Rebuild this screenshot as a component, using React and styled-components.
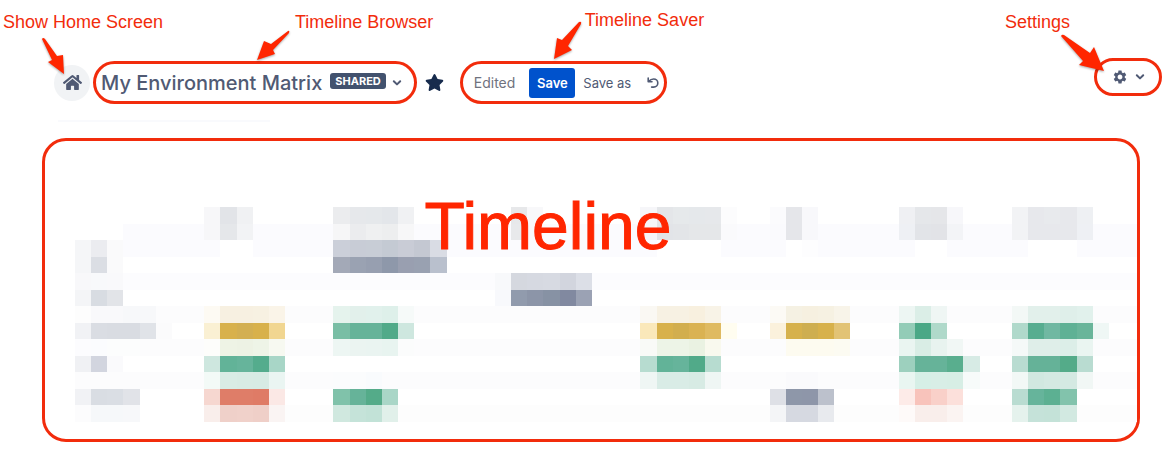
import React from "react";
import styled, { createGlobalStyle } from "styled-components";
import { FaHome, FaStar } from "react-icons/fa";
import { MdSettings } from "react-icons/md";

const RED = "#f22c0c";
const SLATE = "#505a74";

const GlobalStyle = createGlobalStyle`
  * { box-sizing: border-box; }
  body {
    margin: 0;
    background: #fff;
    color: ${SLATE};
    font-family: Inter, "Liberation Sans", sans-serif;
  }
  button { font-family: inherit; cursor: pointer; }
`;

const Page = styled.div`
  padding-bottom: 12px;
`;

const Header = styled.header`
  display: flex;
  align-items: flex-start;
  justify-content: space-between;
  padding: 58px 12px 0 54px;
`;

const Tools = styled.div`
  display: flex;
  align-items: center;
  padding-top: 3px;
`;

const Target = styled.div`
  position: relative;
  display: flex;
  flex: none;
  margin-left: ${(p) => p.$gap || 0}px;
`;

const Ring = styled.div`
  display: flex;
  align-items: center;
  height: ${(p) => p.$height}px;
  border: 3px solid ${RED};
  border-radius: 22px;
  padding: 0 ${(p) => p.$right}px 0 ${(p) => p.$left}px;
`;

const CalloutLabel = styled.span`
  position: absolute;
  left: ${(p) => p.$left}px;
  top: ${(p) => p.$top}px;
  color: ${RED};
  font: 18px/20px "Liberation Sans", Arial, sans-serif;
  white-space: nowrap;
  pointer-events: none;
`;

const CalloutArrow = styled.svg`
  position: absolute;
  left: ${(p) => p.$left}px;
  top: ${(p) => p.$top}px;
  overflow: visible;
  fill: #ff2600;
  filter: drop-shadow(0 1px 1px rgba(0, 0, 0, 0.35));
  pointer-events: none;
`;

const HomeButton = styled.button`
  display: flex;
  align-items: center;
  justify-content: center;
  width: 36px;
  height: 36px;
  padding: 0;
  border: 0;
  border-radius: 50%;
  background: #f1f3f5;
  color: ${SLATE};
`;

const BrowserButton = styled.button`
  display: flex;
  align-items: center;
  padding: 0;
  border: 0;
  background: none;
  color: ${SLATE};
`;

const Title = styled.span`
  font-size: 20px;
  line-height: 28px;
  font-weight: 500;
  white-space: nowrap;
`;

const Badge = styled.span`
  margin: 0 6px 4px 8px;
  padding: 0 5px;
  border-radius: 3px;
  background: #42526e;
  color: #fff;
  font-size: 11px;
  line-height: 16px;
  font-weight: 700;
`;

const IconButton = styled.button`
  display: flex;
  align-items: center;
  margin-left: ${(p) => p.$gap || 0}px;
  padding: 0;
  border: 0;
  background: none;
  color: ${(p) => p.$color || SLATE};
`;

const Status = styled.span`
  color: #6f727e;
  font-size: 14px;
  line-height: 20px;
`;

const SaveButton = styled.button`
  width: 46px;
  height: 30px;
  margin-left: 14px;
  padding: 0;
  border: 0;
  border-radius: 3px;
  background: #0052cc;
  color: #fff;
  font-size: 13px;
  font-weight: 600;
`;

const TextButton = styled.button`
  margin-left: 8px;
  padding: 0;
  border: 0;
  background: none;
  color: ${SLATE};
  font-size: 13px;
  white-space: nowrap;
`;

const Divider = styled.div`
  width: 212px;
  height: 2px;
  margin: 16px 0 0 58px;
  background: #f9fafd;
`;

const Panel = styled.main`
  display: grid;
  margin: 16px 34px 0 42px;
  border: 3px solid ${RED};
  border-radius: 24px;
`;

const PanelTitle = styled.h1`
  grid-area: 1 / 1;
  z-index: 1;
  justify-self: center;
  margin: 47px 86px 0 0;
  color: #ff2600;
  font: 66px/76px "Liberation Sans", Arial, sans-serif;
  -webkit-text-stroke: 1px #ff2600;
`;

const Mosaic = styled.div`
  grid-area: 1 / 1;
  display: grid;
  grid-template-columns: repeat(65, minmax(0, 1fr)) 12px;
  grid-template-rows: repeat(13, minmax(0, 1fr));
  height: 215px;
  margin: 66px 0 17px 30px;
`;

const Block = styled.div`
  grid-row: ${(p) => p.$row + 1};
  grid-column: ${(p) => p.$col + 1} / span ${(p) => p.$span || 1};
  background: ${(p) => p.$color};
`;

// Faint stripes behind the blocks: row, first column, span, colour
const stripes = [
  [1, 3, 63, "#fbfbfe"],
  [2, 3, 63, "#fbfbfe"],
  [4, 0, 66, "#fcfcfe"],
  [6, 0, 66, "#fcfcfd"],
  [8, 0, 66, "#fcfcfd"],
  [10, 0, 66, "#fcfcfd"],
  [12, 8, 58, "#fdfdfd"],
];

// Runs of blocks: row, first column, one colour for each column
const runs = [
  [0, 8, "#f7f7f9 #e2e4e8 #f0f1f3"],
  [0, 16, "#ebecee #e6e8eb #e5e8eb #e3e6ea #f0f1f3"],
  [0, 27, "#e7e8ea #f8f8fa"],
  [0, 35, "#f6f6f9 #e4e6e9 #e6e9eb #e5e8eb #e6e8eb #fcfcfd"],
  [0, 43, "#fbfbfd #e5e6ea #f8f8fb"],
  [0, 51, "#eff0f3 #e5e7ea #e5e6e9 #f7f7fa"],
  [0, 58, "#f2f3f5 #e7e8ec #e8eaed #e7e8ec #eef0f3"],
  [1, 8, "#f7f7f9 #e5e7ea #f2f3f5"],
  [1, 16, "#f6f6f7 #ebecee #eff0f1 #edeeef #f7f7f8"],
  [1, 27, "#e8e9eb #f8f8fa"],
  [1, 35, "#f6f6f9 #e2e4e8 #e3e5e8 #e5e7e9 #e5e7e9 #fafafc"],
  [1, 43, "#fafafd #e5e6ea #f8f8fb"],
  [1, 51, "#eef0f4 #e2e4e8 #e2e3e7 #f3f4f7"],
  [1, 58, "#f2f3f5 #e7e8ec #e7e8ec #e7e8ec #eef0f4"],
  [2, 0, "#f5f6f8 #ebecf0 #fafafb"],
  [2, 9, "#ffffff #ffffff"],
  [2, 16, "#cbcfd9 #c8ccd6 #c8cdd6 #c4cad3 #c9ccd6 #c4c8d2 #d9dce4"],
  [2, 36, "#ffffff #ffffff #ffffff #ffffff"],
  [2, 44, "#ffffff #fdfdfe"],
  [2, 52, "#ffffff #ffffff"],
  [2, 59, "#ffffff #ffffff #ffffff"],
  [3, 0, "#f5f6f8 #dbdee4 #fafafb"],
  [3, 16, "#a3a9b7 #9aa2b2 #979fb0 #8e98aa #999fb0 #99a1b1 #b9c0cd"],
  [4, 0, "#f8f8fa #f8f9fb #f9f9fb"],
  [4, 26, "#f8f9fb #d5d8df #d6d9e1 #d7dae2 #d2d5de #dcdfe7"],
  [5, 0, "#f4f5f7 #d8dce2 #e2e4e8"],
  [5, 26, "#f8f9fc #919bad #8c95a8 #8792a4 #8189a0 #9ba2b4"],
  [6, 0, "#fdfdfd #f9f9fb #f9f9fb #f7f8fa #f7f8fa"],
  [6, 8, "#fdfaf3 #f7f0e1 #f7f0e1 #f7f1e2 #faf4e8"],
  [6, 16, "#e5f3ed #e2f0eb #e1f1ec #def0ea #f6faf9"],
  [6, 35, "#faf8f3 #f7f1e3 #f7f1e3 #f8f0df #f8f3e7"],
  [6, 43, "#fcfaf5 #f5f1e3 #f6f0e0 #f6f1e2 #f8f4e9"],
  [6, 51, "#edf6f3 #dbeee7 #eff6f4"],
  [6, 58, "#f3f8f6 #e2f0eb #e2f0eb #dfefea #e1f1ec"],
  [7, 0, "#f1f2f5 #dadde3 #d9dce2 #d9dce2 #e0e3e8 #fbfbfc"],
  [7, 8, "#faf0d3 #d8b14c #d3af51 #d8b14b #f1d691"],
  [7, 16, "#79bea5 #66b399 #66b399 #51aa89 #cee7df"],
  [7, 35, "#fae8ba #d8b14b #d2ae4e #dab252 #dfba61 #fffdf0"],
  [7, 43, "#fbf1dc #d6b14c #ceae50 #d7b14b #e2c375"],
  [7, 51, "#93ccb7 #4aa886 #afd9ca"],
  [7, 58, "#b0d9cb #57ad90 #70b8a2 #5fb195 #69b59a #eff7f5"],
  [8, 0, "#fcfcfe #fbfcfe #fcfdfd #fcfdfd"],
  [8, 8, "#fdfdfb #eef3e5 #edf2e4 #eef4e7 #f7f9f1"],
  [8, 16, "#edf6f3 #ebf4f1 #eaf4f1 #e8f4f0 #fbfcfc"],
  [8, 35, "#f9faf7 #edf4e7 #edf4e7 #eaf2e2 #f9f9ee"],
  [8, 44, "#fdfbf0 #fdfbf0 #fdfbf0 #fcfbf2"],
  [8, 51, "#eaf5f1 #d9ede5 #e8f3ef #f1f7f5"],
  [8, 58, "#f5f9f8 #dfeee9 #dfeee9 #dceee8 #eaf5f1"],
  [9, 0, "#f0f1f4 #d2d5df #fafafc"],
  [9, 8, "#cee7df #62b398 #66b49b #54ac8d #a8d6c7"],
  [9, 35, "#b7dcd0 #62b398 #66b49b #51aa89 #b7dcd0"],
  [9, 51, "#9dd0be #66b399 #66b399 #59ae8e #d7ebe5"],
  [9, 58, "#b9dcd1 #65b298 #65b298 #54ab89 #b9dcd1"],
  [10, 8, "#f3faf7 #d9ece5 #d8ebe4 #d7ebe4 #eaf5f2"],
  [10, 16, "#fbfcfd #fbfcfd #f9fbfd"],
  [10, 35, "#eff6f4 #d9ece6 #d9ece6 #d7ebe4 #eff6f4"],
  [10, 44, "#fafafc #fafafc"],
  [10, 51, "#e9f6f1 #d6efe6 #d8eee6 #d7eee5 #f7fbfa"],
  [10, 58, "#f2f8f6 #d1e8e0 #d4e9e2 #d4e9e2 #f1f7f5"],
  [11, 0, "#f1f2f5 #d9dde3 #dadee4 #e1e3e8"],
  [11, 8, "#f6d7d0 #df7d68 #df7d68 #df7b66 #fbe8e5"],
  [11, 16, "#80c2aa #66b399 #54ab89 #a9d6c7"],
  [11, 43, "#dee0e6 #8e97a9 #8e96a9 #bcc1cc"],
  [11, 51, "#fdebe8 #f8c3bb #f9d0c9 #fce0db"],
  [11, 58, "#b9dcd1 #66b49b #5cb092 #82c3ac"],
  [12, 0, "#fcfcfd #f6f8fa #f6f8fa #f7f8fa"],
  [12, 8, "#f9eeeb #efd0c9 #f0d1ca #efcfc8 #faf4f3"],
  [12, 16, "#d0e8df #c5e3d9 #c2e2d7 #e1f0ea"],
  [12, 43, "#f4f5f7 #d6d9e1 #d6d9e1 #e8eaee"],
  [12, 51, "#fefaf9 #f9eeeb #f9eeeb #fbf4f2"],
  [12, 58, "#e5f2ed #c5e2d9 #c4e2d8 #d2e9e1"],
];

const arrows = {
  home: "M1 1Q2-1 4 1L16 18 22 17 23 36 7 24 11 22Z",
  browser: "M31 1Q33 0 32 3L16 20 18 24 0 30 7 11 14 14Z",
  saver: "M25 1Q28 0 27 3L14 25 18 29 0 38 3 17 8 19Z",
  settings: "M0 1Q1-1 3 0L29 18 33 12 43 36 18 30 22 26Z",
};

function Callout({ text, shape, labelAt, arrowAt }) {
  return (
    <>
      <CalloutLabel $left={labelAt[0]} $top={labelAt[1]}>
        {text}
      </CalloutLabel>
      <CalloutArrow
        $left={arrowAt[0]}
        $top={arrowAt[1]}
        width="44"
        height="38"
        aria-hidden="true"
      >
        <path d={arrows[shape]} />
      </CalloutArrow>
    </>
  );
}

function Chevron() {
  return (
    <svg width="10" height="8" viewBox="0 0 10 8" fill="none" aria-hidden="true">
      <path
        d="M1.8 2.2 5 5.4 8.2 2.2"
        stroke="currentColor"
        strokeWidth="2"
        strokeLinecap="round"
        strokeLinejoin="round"
      />
    </svg>
  );
}

function UndoIcon() {
  return (
    <svg width="12" height="12" viewBox="0 0 12 12" fill="none" aria-hidden="true">
      <path
        d="M1.2 1v3.8H5M1.6 4.4C3 3 4.6 2 6.6 2c2.4 0 4.2 1.7 4.2 4s-1.8 4.1-4.2 4.1H4.6"
        stroke="currentColor"
        strokeWidth="1.6"
        strokeLinecap="round"
        strokeLinejoin="round"
      />
    </svg>
  );
}

export default function App() {
  return (
    <Page>
      <GlobalStyle />
      <Header>
        <Tools>
          <Target>
            <HomeButton aria-label="Home">
              <FaHome size={19} />
            </HomeButton>
            <Callout text="Show Home Screen" shape="home" labelAt={[-51, -53]} arrowAt={[-13, -27]} />
          </Target>
          <Target $gap={3}>
            <Ring $height={43} $left={5} $right={12}>
              <BrowserButton>
                <Title>My Environment Matrix</Title>
                <Badge>SHARED</Badge>
                <Chevron />
              </BrowserButton>
            </Ring>
            <Callout text="Timeline Browser" shape="browser" labelAt={[202, -49]} arrowAt={[164, -31]} />
          </Target>
          <IconButton $gap={8} $color="#172b4d" aria-label="Favourite">
            <FaStar size={19} />
          </IconButton>
          <Target $gap={16}>
            <Ring $height={43} $left={11} $right={5}>
              <Status>Edited</Status>
              <SaveButton>Save</SaveButton>
              <TextButton>Save as</TextButton>
              <IconButton $gap={16} aria-label="Undo">
                <UndoIcon />
              </IconButton>
            </Ring>
            <Callout text="Timeline Saver" shape="saver" labelAt={[125, -51]} arrowAt={[94, -40]} />
          </Target>
        </Tools>
        <Target>
          <Ring $height={38} $left={15} $right={14}>
            <IconButton aria-label="Settings">
              <MdSettings size={16} />
            </IconButton>
            <IconButton $gap={7} aria-label="More settings">
              <Chevron />
            </IconButton>
          </Ring>
          <Callout text="Settings" shape="settings" labelAt={[-89, -46]} arrowAt={[-33, -23]} />
        </Target>
      </Header>
      <Divider />
      <Panel>
        <PanelTitle>Timeline</PanelTitle>
        <Mosaic aria-hidden="true">
          {stripes.map(([row, col, span, color]) => (
            <Block key={`s${row}`} $row={row} $col={col} $span={span} $color={color} />
          ))}
          {runs.map(([row, col, colors]) =>
            colors.split(" ").map((color, i) => (
              <Block key={`${row}-${col + i}`} $row={row} $col={col + i} $color={color} />
            ))
          )}
        </Mosaic>
      </Panel>
    </Page>
  );
}
